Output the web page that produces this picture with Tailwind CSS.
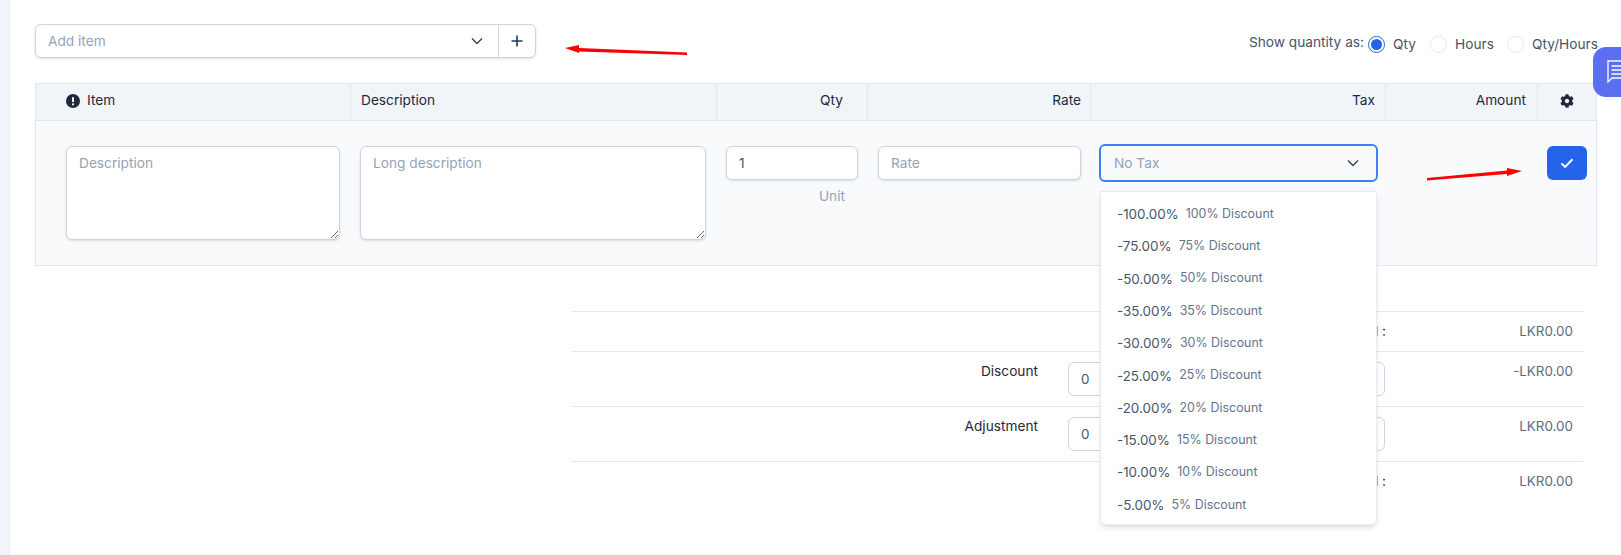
<!doctype html>
<html>
<head>
<meta charset="utf-8">
<script src="https://cdn.jsdelivr.net/npm/@tailwindcss/browser@4"></script>
</head>
<body class="bg-white">
<div class="relative flex w-[1621px] h-[555px] overflow-hidden bg-white font-['Inter',sans-serif] text-[13.7px] text-[#475569]">
  <div class="w-[10px] shrink-0 bg-[#f1f5f9] border-r border-[#e8edf4]"></div>
  <main class="flex-1 pl-[25px] pt-[24px]">
    <!-- top row -->
    <div class="flex items-start justify-between w-[1562px] h-[59px]">
      <div class="flex w-[501px] h-[34px] rounded-md border border-[#cbd5e1] bg-white shadow-sm">
        <div class="flex flex-1 items-center justify-between pl-[12px] pr-[15px] text-[#94a3b8]">
          <span>Add item</span>
          <svg class="w-[12px] h-[12px]" viewBox="0 0 12 12" fill="none" stroke="#334155" stroke-width="1.3"><path d="M1 3.5l5 5 5-5"/></svg>
        </div>
        <div class="flex w-[37px] items-center justify-center border-l border-[#cbd5e1]">
          <svg class="w-[14px] h-[14px]" viewBox="0 0 14 14" fill="none" stroke="#1e3a5f" stroke-width="1.6"><path d="M7 1.5v11M1.5 7h11"/></svg>
        </div>
      </div>
      <div class="flex items-center h-[42px] whitespace-nowrap -mt-[1px]">
        <span class="mr-[4px] -mt-[4px]">Show quantity as:</span>
        <span class="flex w-[17px] h-[17px] items-center justify-center rounded-full border border-[#2563eb] bg-white"><span class="w-[11px] h-[11px] rounded-full bg-[#2563eb]"></span></span>
        <span class="ml-[8px] w-[37px] mt-[1px]">Qty</span>
        <span class="w-[17px] h-[17px] rounded-full border border-[#e2e8f0] bg-white"></span>
        <span class="ml-[8px] w-[52px] mt-[1px]">Hours</span>
        <span class="w-[17px] h-[17px] rounded-full border border-[#e2e8f0] bg-white"></span>
        <span class="ml-[8px] w-[65px] mt-[1px]">Qty/Hours</span>
      </div>
    </div>

    <!-- items table -->
    <div class="w-[1562px] border border-[#e2e8f0] text-[#1e293b]">
      <div class="grid grid-cols-[315px_366px_151px_223px_295px_152px_1fr] h-[37px] bg-[#f1f5f9] border-b border-[#e2e8f0]">
        <div class="flex items-center gap-[7px] pl-[30px] pb-[2px] border-r border-[#e2e8f0]">
          <svg class="w-[14px] h-[14px]" viewBox="0 0 14 14"><circle cx="7" cy="7" r="7" fill="#1e293b"/><rect x="6" y="3" width="2" height="5.2" rx="1" fill="#fff"/><circle cx="7" cy="10.3" r="1.1" fill="#fff"/></svg>
          <span class="-mt-[1px]">Item</span>
        </div>
        <div class="flex items-center pl-[10px] pb-[3px] border-r border-[#e2e8f0]">Description</div>
        <div class="flex items-center justify-end pr-[24px] pb-[3px] border-r border-[#e2e8f0]">Qty</div>
        <div class="flex items-center justify-end pr-[9px] pb-[3px] border-r border-[#e2e8f0]">Rate</div>
        <div class="flex items-center justify-end pr-[10px] pb-[3px] border-r border-[#e2e8f0]">Tax</div>
        <div class="flex items-center justify-end pr-[11px] pb-[3px] border-r border-[#e2e8f0]">Amount</div>
        <div class="flex items-center justify-center pb-[2px]">
          <svg class="w-[14px] h-[14px]" viewBox="0 0 512 512" fill="#1e293b"><path d="M487.4 315.7l-42.6-24.6c4.3-23.2 4.3-47 0-70.2l42.6-24.6c4.9-2.8 7.1-8.6 5.5-14-11.1-35.6-30-67.8-54.7-94.6-3.8-4.1-10-5.1-14.8-2.3L380.8 110c-17.9-15.4-38.5-27.3-60.8-35.1V25.8c0-5.6-3.9-10.5-9.4-11.7-36.7-8.2-74.3-7.8-109.2 0-5.5 1.2-9.4 6.1-9.4 11.7V75c-22.2 7.9-42.8 19.8-60.8 35.1L88.7 85.5c-4.9-2.8-11-1.9-14.8 2.3-24.7 26.7-43.6 58.9-54.7 94.6-1.7 5.4.6 11.2 5.5 14L67.3 221c-4.3 23.2-4.3 47 0 70.2l-42.6 24.6c-4.9 2.8-7.1 8.6-5.5 14 11.1 35.6 30 67.8 54.7 94.6 3.8 4.1 10 5.1 14.8 2.3l42.6-24.6c17.9 15.4 38.5 27.3 60.8 35.1v49.2c0 5.6 3.9 10.5 9.4 11.7 36.7 8.2 74.3 7.8 109.2 0 5.5-1.2 9.4-6.1 9.4-11.7v-49.2c22.2-7.9 42.8-19.8 60.8-35.1l42.6 24.6c4.9 2.8 11 1.9 14.8-2.3 24.7-26.7 43.6-58.9 54.7-94.6 1.5-5.5-.7-11.3-5.6-14.1zM256 336c-44.1 0-80-35.9-80-80s35.9-80 80-80 80 35.9 80 80-35.9 80-80 80z"/></svg>
        </div>
      </div>
      <div class="grid grid-cols-[315px_366px_151px_223px_295px_152px_1fr] h-[144px] bg-[#f8fafc] text-[#475569]">
        <div class="pt-[25px] pl-[30px]">
          <textarea placeholder="Description" class="block w-[274px] h-[94px] rounded-md border border-[#cbd5e1] bg-white px-[12px] py-[6px] shadow-sm placeholder:text-[#94a3b8] outline-none"></textarea>
        </div>
        <div class="pt-[25px] pl-[9px]">
          <textarea placeholder="Long description" class="block w-[346px] h-[94px] rounded-md border border-[#cbd5e1] bg-white px-[12px] py-[6px] shadow-sm placeholder:text-[#94a3b8] outline-none"></textarea>
        </div>
        <div class="pt-[25px] pl-[9px]">
          <input value="1" class="block w-[132px] h-[34px] rounded-md border border-[#cbd5e1] bg-white px-[12px] shadow-sm outline-none">
          <div class="mt-[6px] pr-[23px] text-right text-[#94a3b8]">Unit</div>
        </div>
        <div class="pt-[25px] pl-[10px]">
          <input placeholder="Rate" class="block w-[203px] h-[34px] rounded-md border border-[#cbd5e1] bg-white px-[12px] shadow-sm placeholder:text-[#94a3b8] outline-none">
        </div>
        <div class="relative pt-[23px] pl-[8px]">
          <div class="flex w-[279px] h-[38px] items-center justify-between rounded-md border-2 border-[#3b82f6] pl-[13px] pr-[17px] text-[#94a3b8]">
            <span>No Tax</span>
            <svg class="w-[12px] h-[12px]" viewBox="0 0 12 12" fill="none" stroke="#334155" stroke-width="1.3"><path d="M1 3.5l5 5 5-5"/></svg>
          </div>
          <ul class="absolute z-10 left-[9px] top-[70px] w-[277px] h-[334px] rounded-b-md border border-[#e9edf3] bg-white pt-[6px] shadow-md">
            <li class="flex h-[32.3px] items-center pl-[16px]"><span class="text-[13.4px]">-100.00%</span><span class="ml-[7px] text-[12.4px] text-[#64748b]">100% Discount</span></li>
            <li class="flex h-[32.3px] items-center pl-[16px]"><span class="text-[13.4px]">-75.00%</span><span class="ml-[7px] text-[12.4px] text-[#64748b]">75% Discount</span></li>
            <li class="flex h-[32.3px] items-center pl-[16px]"><span class="text-[13.4px]">-50.00%</span><span class="ml-[7px] text-[12.4px] text-[#64748b]">50% Discount</span></li>
            <li class="flex h-[32.3px] items-center pl-[16px]"><span class="text-[13.4px]">-35.00%</span><span class="ml-[7px] text-[12.4px] text-[#64748b]">35% Discount</span></li>
            <li class="flex h-[32.3px] items-center pl-[16px]"><span class="text-[13.4px]">-30.00%</span><span class="ml-[7px] text-[12.4px] text-[#64748b]">30% Discount</span></li>
            <li class="flex h-[32.3px] items-center pl-[16px]"><span class="text-[13.4px]">-25.00%</span><span class="ml-[7px] text-[12.4px] text-[#64748b]">25% Discount</span></li>
            <li class="flex h-[32.3px] items-center pl-[16px]"><span class="text-[13.4px]">-20.00%</span><span class="ml-[7px] text-[12.4px] text-[#64748b]">20% Discount</span></li>
            <li class="flex h-[32.3px] items-center pl-[16px]"><span class="text-[13.4px]">-15.00%</span><span class="ml-[7px] text-[12.4px] text-[#64748b]">15% Discount</span></li>
            <li class="flex h-[32.3px] items-center pl-[16px]"><span class="text-[13.4px]">-10.00%</span><span class="ml-[7px] text-[12.4px] text-[#64748b]">10% Discount</span></li>
            <li class="flex h-[32.3px] items-center pl-[16px]"><span class="text-[13.4px]">-5.00%</span><span class="ml-[7px] text-[12.4px] text-[#64748b]">5% Discount</span></li>
          </ul>
        </div>
        <div></div>
        <div class="pt-[25px] pl-[9px]">
          <button class="flex w-[40px] h-[34px] items-center justify-center rounded-md bg-[#2563eb]">
            <svg class="w-[14px] h-[14px]" viewBox="0 0 14 14" fill="none" stroke="#fff" stroke-width="2"><path d="M1.5 7.5l3.6 3.4 7.4-7.6"/></svg>
          </button>
        </div>
      </div>
    </div>

    <!-- totals -->
    <div class="mt-[45px] ml-[536px] w-[1012px] text-[13.4px]">
      <div class="flex h-[40px] items-center justify-end border-t border-[#e2e8f0] pb-[1px]">
        <span class="mr-[97px] text-[13.7px] text-[#1e293b]">Sub Total :</span>
        <span class="pr-[10px] w-[100px] text-right text-[#5b6b82]">LKR0.00</span>
      </div>
      <div class="flex h-[55px] items-start border-t border-[#e2e8f0]">
        <span class="w-[467px] pt-[9px] text-right text-[13.7px] text-[#1e293b]">Discount</span>
        <input value="0" class="ml-[30px] mt-[10px] w-[317px] h-[34px] rounded-md border border-[#cbd5e1] bg-white px-[12px] outline-none">
        <span class="flex-1 pt-[9px] pr-[10px] text-right text-[#5b6b82]">-LKR0.00</span>
      </div>
      <div class="flex h-[55px] items-start border-t border-[#e2e8f0]">
        <span class="w-[467px] pt-[9px] text-right text-[13.7px] text-[#1e293b]">Adjustment</span>
        <input value="0" class="ml-[30px] mt-[10px] w-[317px] h-[34px] rounded-md border border-[#cbd5e1] bg-white px-[12px] outline-none">
        <span class="flex-1 pt-[9px] pr-[10px] text-right text-[#5b6b82]">LKR0.00</span>
      </div>
      <div class="flex h-[40px] items-center justify-end border-t border-[#e2e8f0] pb-[1px]">
        <span class="mr-[97px] text-[13.7px] text-[#1e293b]">Total :</span>
        <span class="pr-[10px] w-[100px] text-right text-[#5b6b82]">LKR0.00</span>
      </div>
    </div>
  </main>

  <!-- annotation arrows -->
  <svg class="absolute left-[560px] top-[40px] z-20 w-[135px] h-[20px]" viewBox="0 0 135 20" fill="red"><path d="M5 8L19 5L19 8L127 12.5L127 15L19 11.5L19 13Z"/></svg>
  <svg class="absolute left-[1420px] top-[160px] z-20 w-[110px] h-[25px]" viewBox="0 0 110 25" fill="red"><path d="M102 11L87 8L87 10.5L7 18L7 20.5L87 14L87 16Z"/></svg>

  <!-- chat tab -->
  <div class="absolute z-20 left-[1593px] top-[47px] flex w-[28px] h-[50px] items-center rounded-l-[13px] bg-[#5b6ff0] pl-[12px]">
    <svg class="w-[24px] h-[24px] shrink-0" viewBox="0 0 24 24" fill="none" stroke="#fff" stroke-width="1.3"><path d="M3 1h20v17H7l-4 4z"/><path d="M6.5 6H23M6.5 10H23M6.5 14H23" stroke-width="1.6"/></svg>
  </div>
</div>
</body>
</html>
